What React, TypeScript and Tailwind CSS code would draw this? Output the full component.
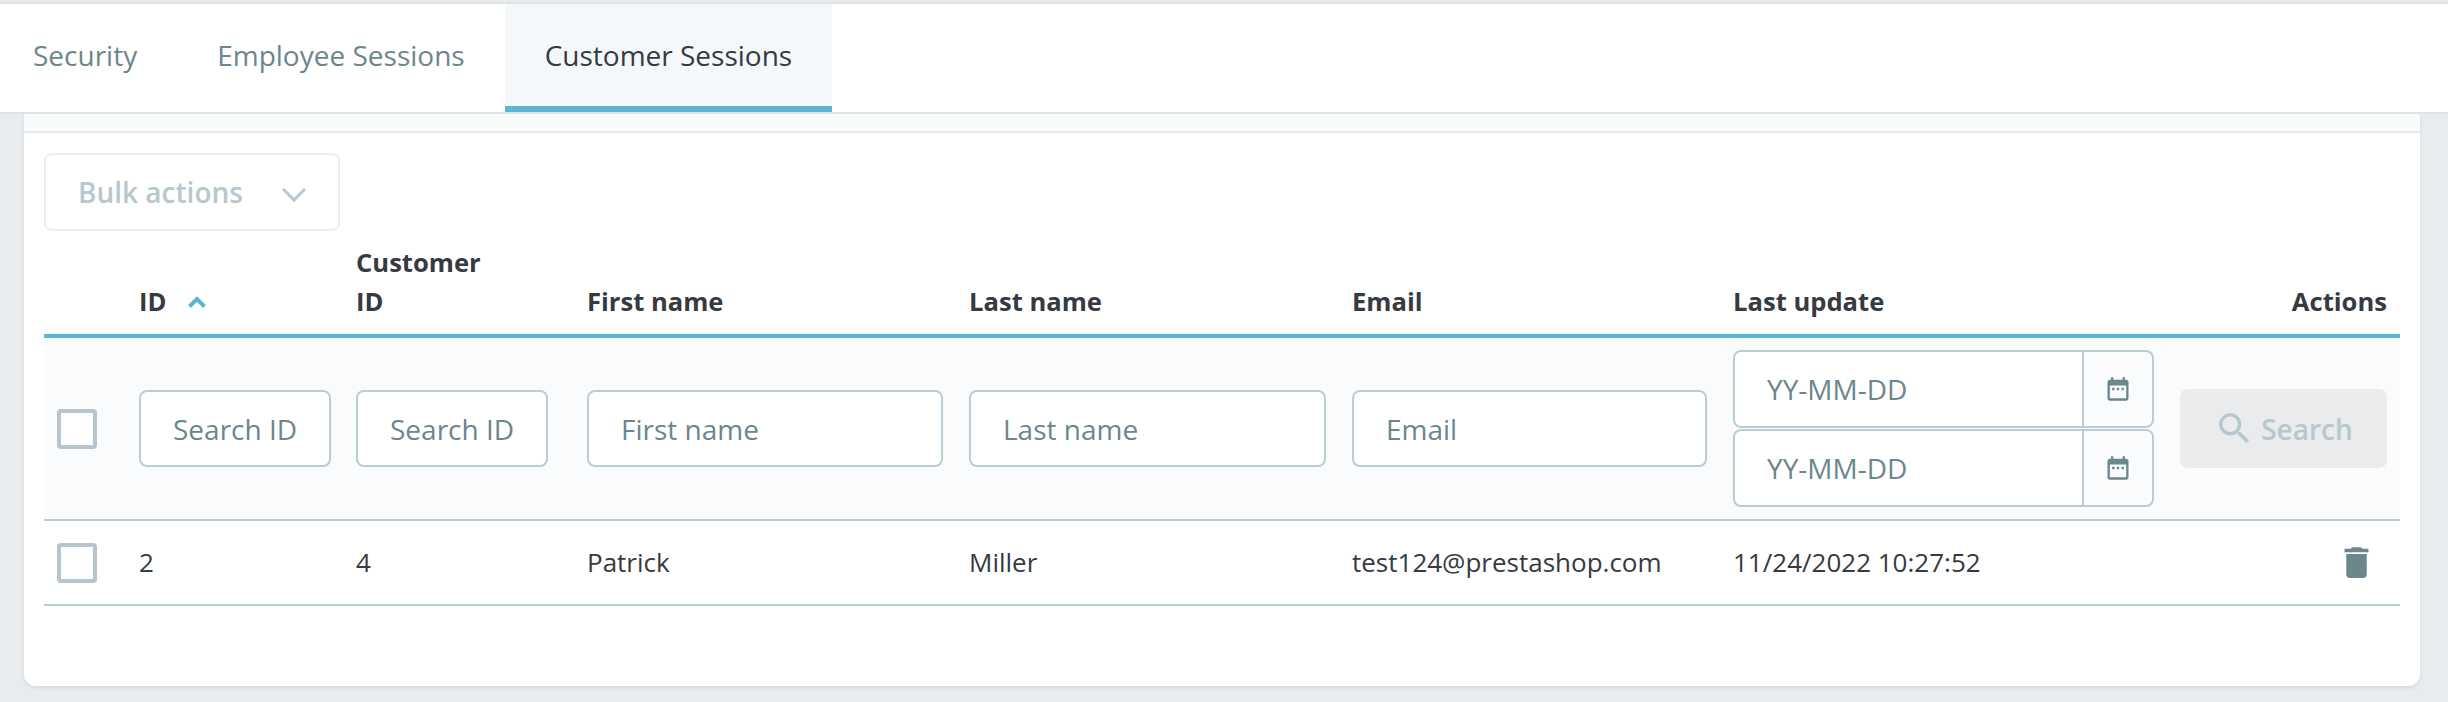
import React from 'react';

const filters = [
  { placeholder: 'Search ID', className: 'w-[192px]' },
  { placeholder: 'Search ID', className: 'w-[192px]' },
  { placeholder: 'First name', className: 'w-[356px]' },
  { placeholder: 'Last name', className: 'w-[357px]' },
  { placeholder: 'Email', className: 'w-[355px]' },
];

const gridCols = 'grid grid-cols-[95px_217px_231px_382px_383px_381px_1fr]';

const Checkbox = () => (
  <div className="ml-[13px] h-10 w-10 rounded-[4px] border-4 border-[#b7c6ce] bg-white" />
);

const CalendarIcon = () => (
  <svg viewBox="0 0 24 24" className="h-7 w-7" fill="#6c868e">
    <path d="M9 11H7v2h2v-2zm4 0h-2v2h2v-2zm4 0h-2v2h2v-2zm2-7h-1V2h-2v2H8V2H6v2H5c-1.11 0-1.99.9-1.99 2L3 20c0 1.1.89 2 2 2h14c1.1 0 2-.9 2-2V6c0-1.1-.9-2-2-2zm0 16H5V9h14v11z" />
  </svg>
);

const DateInput = ({ last }: { last?: boolean }) => (
  <div className={`flex h-[78px] rounded-lg border-2 border-[#bbcdd2] ${last ? '' : 'mb-[1px]'}`}>
    <input
      placeholder="YY-MM-DD"
      className="w-[347px] rounded-l-lg bg-white pl-[32px] text-[28px] outline-none placeholder:text-[#6c868e]"
    />
    <div className="flex flex-1 items-center justify-center border-l-2 border-[#bbcdd2]">
      <CalendarIcon />
    </div>
  </div>
);

export default function App() {
  return (
    <div className="h-[702px] overflow-hidden bg-[#e9ecee] pt-[2px] font-['Open_Sans',sans-serif] text-[26px] text-[#363a41]">
      {/* tabs */}
      <div className="flex h-[112px] border-t-2 border-b-2 border-[#e0e3e4] bg-white text-[28px]">
        <div className="flex items-center pb-[6px] pl-[33px] pr-10 text-[#6c868e]">Security</div>
        <div className="flex items-center px-10 pb-[6px] text-[#6c868e]">Employee Sessions</div>
        <div className="flex items-center border-b-[6px] border-[#5bb5d3] bg-[#f4f8fb] px-10">Customer Sessions</div>
      </div>

      <div className="ml-6 mr-7 h-[572px] rounded-b-xl bg-white shadow-[0_2px_4px_rgba(0,0,0,0.08)]">
        <div className="h-[19px] border-b-2 border-[#e3ebef] bg-[#f8fafc]" />

        <div className="px-5 pt-5">
          <div className="flex h-[78px] w-[296px] items-center rounded-lg border-2 border-[#eceeef] pl-[32px] text-[28px] font-semibold text-[#b7c7ce]">
            Bulk actions
            <svg viewBox="0 0 24 14" className="ml-[39px] mt-[6px] h-[14px] w-6" fill="none" stroke="#b7c7ce" strokeWidth="3">
              <path d="M1 1l11 11L23 1" />
            </svg>
          </div>

          {/* header */}
          <div className={`${gridCols} items-end pb-[13px] pt-[12px] text-[25.6px] font-bold leading-[39px]`}>
            <div />
            <div className="flex items-center">
              ID
              <svg viewBox="0 0 18 12" className="ml-[22px] h-3 w-[18px]" fill="none" stroke="#5bb5d3" strokeWidth="4">
                <path d="M1.5 10.5L9 3l7.5 7.5" />
              </svg>
            </div>
            <div>Customer<br />ID</div>
            <div>First name</div>
            <div>Last name</div>
            <div>Email</div>
            <div className="flex justify-between pr-[13px]">
              <span>Last update</span>
              <span>Actions</span>
            </div>
          </div>

          {/* filter row */}
          <div className={`${gridCols} h-[187px] items-center border-t-4 border-b-2 border-t-[#5bb5d3] border-b-[#bbcdd2] bg-[#fafbfd]`}>
            <Checkbox />
            {filters.map((filter, idx) => (
              <input
                key={idx}
                placeholder={filter.placeholder}
                className={`${filter.className} h-[77px] rounded-lg border-2 border-[#bbcdd2] bg-white pl-[32px] text-[28px] outline-none placeholder:text-[#6c868e]`}
              />
            ))}
            <div className="flex items-center">
              <div className="w-[421px]">
                <DateInput />
                <DateInput last />
              </div>
              <div className="ml-[26px] flex h-[79px] w-[207px] items-center justify-center gap-[6px] rounded-lg bg-[#e9ebed] text-[28px] font-semibold text-[#b7c7ce]">
                <svg viewBox="0 0 24 24" className="h-[41px] w-[41px]" fill="#b7c7ce">
                  <path d="M15.5 14h-.79l-.28-.27C15.41 12.59 16 11.11 16 9.5 16 5.91 13.09 3 9.5 3S3 5.91 3 9.5 5.91 16 9.5 16c1.61 0 3.09-.59 4.23-1.57l.27.28v.79l5 4.99L20.49 19l-4.99-5zm-6 0C7.01 14 5 11.99 5 9.5S7.01 5 9.5 5 14 7.01 14 9.5 11.99 14 9.5 14z" />
                </svg>
                Search
              </div>
            </div>
          </div>

          {/* data row */}
          <div className={`${gridCols} h-[85px] items-center border-b-2 border-[#bbcdd2]`}>
            <Checkbox />
            <div>2</div>
            <div>4</div>
            <div>Patrick</div>
            <div>Miller</div>
            <div>test124@prestashop.com</div>
            <div className="flex items-center justify-between pr-[23px]">
              <span>11/24/2022 10:27:52</span>
              <svg viewBox="0 0 24 24" className="h-[41px] w-[41px]" fill="#6c868e">
                <path d="M6 19c0 1.1.9 2 2 2h8c1.1 0 2-.9 2-2V7H6v12zM19 4h-3.5l-1-1h-5l-1 1H5v2h14V4z" />
              </svg>
            </div>
          </div>
        </div>
      </div>
    </div>
  );
}
